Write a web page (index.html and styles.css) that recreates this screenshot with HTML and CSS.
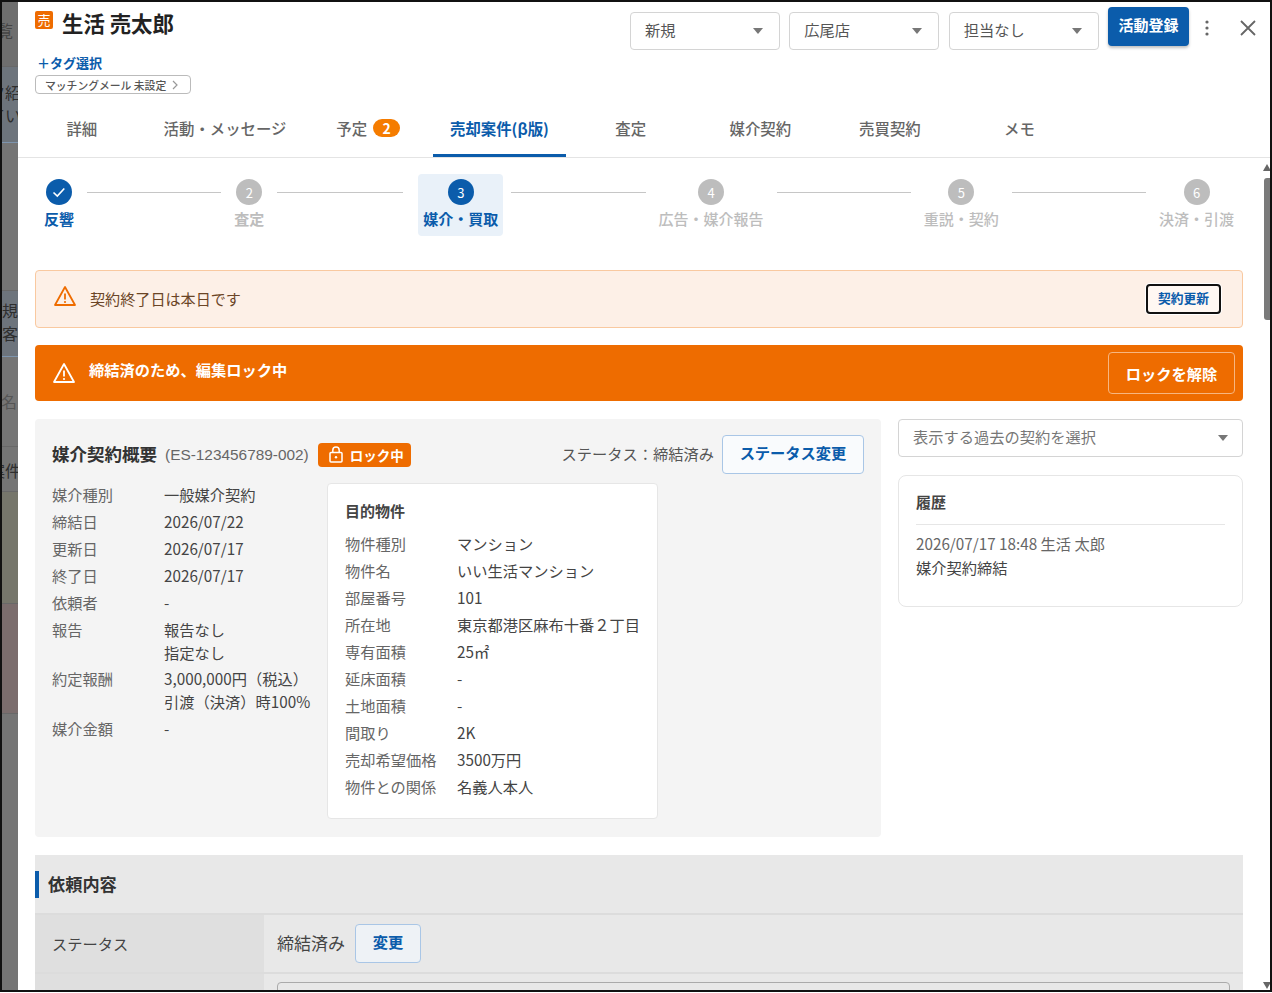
FILE: index.html
```html
<!DOCTYPE html>
<html lang="ja">
<head>
  <meta charset="UTF-8" />
  <title>生活 売太郎</title>
  <link rel="stylesheet" href="styles.css">
</head>
<body>
  <div class="frame">
    <div class="backdrop">
      <div class="bd-row bd-1"><span>覧</span></div>
      <div class="bd-row bd-2"><span>夕紹</span><span>てい</span></div>
      <div class="bd-row bd-3"></div>
      <div class="bd-row bd-4"><span>新規</span><span>顧客</span></div>
      <div class="bd-row bd-5"><span class="dim">名</span></div>
      <div class="bd-row bd-6"><span>案件</span></div>
      <div class="bd-row bd-7"></div>
      <div class="bd-row bd-8"></div>
      <div class="bd-row bd-9"></div>
    </div>

    <div class="modal">
      <div class="head">
        <div class="head-left">
          <div class="title-row">
            <span class="sell-icon">売</span>
            <h1>生活 売太郎</h1>
          </div>
          <a class="tag-link">＋タグ選択</a>
          <div class="mail-pill">マッチングメール 未設定
            <svg width="8" height="10" viewBox="0 0 8 10"><path d="M2 1l4 4-4 4" fill="none" stroke="#999" stroke-width="1.2"/></svg>
          </div>
        </div>
        <div class="head-right">
          <div class="select small"><span>新規</span><i class="caret"></i></div>
          <div class="select small"><span>広尾店</span><i class="caret"></i></div>
          <div class="select small"><span>担当なし</span><i class="caret"></i></div>
          <button class="btn-primary">活動登録</button>
          <svg class="kebab" width="6" height="18" viewBox="0 0 6 18"><circle cx="3" cy="3" r="1.6"/><circle cx="3" cy="9" r="1.6"/><circle cx="3" cy="15" r="1.6"/></svg>
          <svg class="close" width="16" height="16" viewBox="0 0 16 16"><path d="M1 1l14 14M15 1L1 15" stroke="#666" stroke-width="1.8" fill="none"/></svg>
        </div>
      </div>

      <div class="tabs">
        <div class="tab">詳細</div>
        <div class="tab">活動・メッセージ</div>
        <div class="tab">予定<span class="tab-badge">2</span></div>
        <div class="tab active">売却案件(β版)</div>
        <div class="tab">査定</div>
        <div class="tab">媒介契約</div>
        <div class="tab">売買契約</div>
        <div class="tab">メモ</div>
      </div>

      <div class="content">
        <div class="stepper">
          <div class="step done">
            <span class="circle"><svg width="16" height="16" viewBox="0 0 16 16"><path d="M2.5 8.5l3.8 3.6 7-7.6" fill="none" stroke="#fff" stroke-width="1.6"/></svg></span>
            <span class="step-label">反響</span>
          </div>
          <div class="line"></div>
          <div class="step"><span class="circle">2</span><span class="step-label bold">査定</span></div>
          <div class="line line-short"></div>
          <div class="step current"><span class="circle">3</span><span class="step-label">媒介・買取</span></div>
          <div class="line"></div>
          <div class="step"><span class="circle">4</span><span class="step-label">広告・媒介報告</span></div>
          <div class="line"></div>
          <div class="step"><span class="circle">5</span><span class="step-label">重説・契約</span></div>
          <div class="line"></div>
          <div class="step"><span class="circle">6</span><span class="step-label">決済・引渡</span></div>
        </div>

        <div class="alert alert-warn">
          <svg width="24" height="22" viewBox="0 0 24 22"><path d="M12 2L2 20h20z" fill="none" stroke="#ee6c00" stroke-width="1.8" stroke-linejoin="round"/><path d="M12 8.5v6" stroke="#ee6c00" stroke-width="1.8"/><circle cx="12" cy="17" r="1.1" fill="#ee6c00"/></svg>
          <span class="alert-text">契約終了日は本日です</span>
          <button class="btn-renew">契約更新</button>
        </div>

        <div class="alert alert-lock">
          <svg width="24" height="22" viewBox="0 0 24 22"><path d="M12 2L2 20h20z" fill="none" stroke="#fff" stroke-width="1.8" stroke-linejoin="round"/><path d="M12 8.5v6" stroke="#fff" stroke-width="1.8"/><circle cx="12" cy="17" r="1.1" fill="#fff"/></svg>
          <span class="alert-text">締結済のため、編集ロック中</span>
          <button class="btn-unlock">ロックを解除</button>
        </div>

        <div class="columns">
          <div class="panel">
            <div class="panel-head">
              <h2>媒介契約概要</h2>
              <span class="contract-no">(ES-123456789-002)</span>
              <span class="lock-badge">
                <svg width="14" height="17" viewBox="0 0 14 17"><rect x="1" y="6.5" width="12" height="9.5" rx="1" fill="none" stroke="#fff" stroke-width="1.5"/><path d="M3.8 6.5V4.2a3.2 3.2 0 0 1 6.4 0v2.3" fill="none" stroke="#fff" stroke-width="1.5"/><circle cx="7" cy="11.2" r="1.2" fill="#fff"/></svg>
                ロック中
              </span>
              <span class="status-text">ステータス：締結済み</span>
              <button class="btn-outline btn-status">ステータス変更</button>
            </div>
            <div class="panel-body">
              <dl class="summary">
                <div class="row"><dt>媒介種別</dt><dd>一般媒介契約</dd></div>
                <div class="row"><dt>締結日</dt><dd>2026/07/22</dd></div>
                <div class="row"><dt>更新日</dt><dd>2026/07/17</dd></div>
                <div class="row"><dt>終了日</dt><dd>2026/07/17</dd></div>
                <div class="row"><dt>依頼者</dt><dd>-</dd></div>
                <div class="row tight"><dt>報告</dt><dd>報告なし<br>指定なし</dd></div>
                <div class="row"><dt>約定報酬</dt><dd>3,000,000円（税込）<br>引渡（決済）時100%</dd></div>
                <div class="row"><dt>媒介金額</dt><dd>-</dd></div>
              </dl>
              <div class="property">
                <h3>目的物件</h3>
                <dl>
                  <div class="row"><dt>物件種別</dt><dd>マンション</dd></div>
                  <div class="row"><dt>物件名</dt><dd>いい生活マンション</dd></div>
                  <div class="row"><dt>部屋番号</dt><dd>101</dd></div>
                  <div class="row"><dt>所在地</dt><dd>東京都港区麻布十番２丁目</dd></div>
                  <div class="row"><dt>専有面積</dt><dd>25㎡</dd></div>
                  <div class="row"><dt>延床面積</dt><dd>-</dd></div>
                  <div class="row"><dt>土地面積</dt><dd>-</dd></div>
                  <div class="row"><dt>間取り</dt><dd>2K</dd></div>
                  <div class="row"><dt>売却希望価格</dt><dd>3500万円</dd></div>
                  <div class="row"><dt>物件との関係</dt><dd>名義人本人</dd></div>
                </dl>
              </div>
            </div>
          </div>

          <div class="side">
            <div class="select past"><span>表示する過去の契約を選択</span><i class="caret"></i></div>
            <div class="history">
              <h3>履歴</h3>
              <p class="history-date">2026/07/17 18:48 生活 太郎</p>
              <p class="history-text">媒介契約締結</p>
            </div>
          </div>
        </div>

        <div class="request">
          <div class="request-title"><h2>依頼内容</h2></div>
          <div class="req-row">
            <div class="req-label">ステータス</div>
            <div class="req-value">締結済み<button class="btn-outline btn-change">変更</button></div>
          </div>
          <div class="req-row">
            <div class="req-label"></div>
            <div class="req-value top"><div class="req-input"></div></div>
          </div>
        </div>
      </div>

      <div class="scrollbar">
        <i class="sb-up"></i>
        <i class="sb-thumb"></i>
        <i class="sb-down"></i>
      </div>
    </div>
  </div>
</body>
</html>
```

FILE: styles.css
```css
* { box-sizing: border-box; }
html, body { margin: 0; padding: 0; background: #fff; }
body {
  font-family: "Noto Sans CJK JP", "Noto Sans", sans-serif;
  font-size: 15px;
  color: #444;
  overflow: hidden;
}
h1, h2, h3, p, dl, dd { margin: 0; }
button { font-family: inherit; cursor: pointer; }

.frame {
  width: 1272px; height: 992px;
  border: 2px solid #111;
  display: flex;
  overflow: hidden;
}

/* dimmed page behind the modal */
.backdrop { width: 16px; flex: none; background: #757575; overflow: hidden; }
.bd-row {
  display: flex; flex-direction: column; align-items: flex-end;
  overflow: hidden;
  font-size: 16px; line-height: 23px;
  color: #2e2e2e;
  white-space: nowrap;
  border-bottom: 1px solid #686868;
}
.bd-row span { margin-right: -3px; }
.bd-row .dim { color: #555; margin-right: 1px; }
.bd-1 { height: 65px; padding-top: 17px; background: #6e6e6e; color: #444; }
.bd-1 span { margin-right: 5px; }
.bd-2 { height: 76px; padding-top: 14px; background: #6d747c; border-color: #7d94ad; }
.bd-3 { height: 148px; }
.bd-4 { height: 66px; padding-top: 8px; background: #6d747c; border-color: #7d94ad; }
.bd-4 span { margin-right: 0; }
.bd-5 { height: 90px; padding-top: 33px; }
.bd-6 { height: 45px; padding-top: 12px; }
.bd-7 { height: 112px; background: #76766b; }
.bd-8 { height: 110px; background: #7b6d6d; }
.bd-9 { height: 280px; }

.modal { flex: 1; position: relative; background: #fff; overflow: hidden; }

/* header */
.head { height: 101px; display: flex; justify-content: space-between; padding: 0 0 0 17px; }
.title-row { display: flex; align-items: flex-start; height: 46px; padding-top: 9px; }
.sell-icon {
  width: 18px; height: 18px; flex: none;
  background: #ee6c00; color: #fff; border-radius: 2px;
  font-size: 13px; line-height: 18px; text-align: center;
}
h1 { margin-left: 9px; margin-top: -2px; font-size: 21.4px; line-height: 27px; font-weight: 700; color: #222; white-space: nowrap; }
.tag-link { display: block; margin: 6px 0 0 2px; font-size: 13px; line-height: 18px; font-weight: 700; color: #0b5cab; }
.mail-pill {
  margin-top: 3px; width: 156px; height: 19px;
  border: 1px solid #bbb; border-radius: 4px; background: #fff;
  padding-left: 9px;
  display: flex; align-items: center; gap: 5px;
  font-size: 10.8px; font-weight: 500; color: #555; white-space: nowrap;
}
.head-right { display: flex; align-items: flex-start; padding-top: 5px; }
.select {
  display: flex; align-items: center; justify-content: space-between;
  background: #fff; border: 1px solid #d4d4d4; border-radius: 4px;
  color: #555; font-size: 15.25px;
}
.select span { margin-top: -5px; }
.select.small { width: 150px; height: 38px; margin: 5px 9.33px 0 0; padding: 0 16px 0 14px; }
.caret { width: 0; height: 0; border-left: 5.5px solid transparent; border-right: 5.5px solid transparent; border-top: 6px solid #777; }
.btn-primary {
  width: 81px; height: 39px; margin-left: 0; padding: 0 0 4px;
  background: #0b5cab; color: #fff; border: none; border-radius: 4px;
  font-size: 15px; font-weight: 700;
  box-shadow: 0 2px 3px rgba(0,0,0,0.25);
}
.kebab { fill: #666; margin: 12px 0 0 15px; }
.close { margin: 13px 14px 0 30px; }

/* tabs */
.tabs { display: flex; height: 55px; padding-left: 0; border-bottom: 1px solid #e4e4e4; }
.tab {
  min-width: 129.6px; height: 54px; padding: 0 17px 4px;
  display: flex; align-items: center; justify-content: center;
  font-size: 15.4px; font-weight: 500; color: #666; white-space: nowrap;
}
.tab:first-child { margin-left: -1px; }
.tab.active { color: #0b5cab; font-weight: 700; border-bottom: 3px solid #0b5cab; padding-bottom: 1px; min-width: 132px; }
.tab-badge {
  margin-left: 6px; width: 27px; height: 18px; border-radius: 9px;
  background: #f57c00; color: #fff;
  font-size: 14px; font-weight: 700; line-height: 18px; text-align: center;
}

.content { padding: 16px 27px 0 17px; }

/* stepper */
.stepper { display: flex; align-items: flex-start; height: 62px; padding: 0 9px; }
.step { display: flex; flex-direction: column; align-items: center; flex: none; padding-top: 5px; height: 62px; }
.circle {
  width: 26px; height: 26px; border-radius: 50%;
  background: #bdbdbd; color: #fff;
  display: flex; align-items: center; justify-content: center;
  font-size: 13px;
}
.step-label { margin-top: 4px; font-size: 15px; line-height: 20px; color: #bdbdbd; white-space: nowrap; font-weight: 500; }
.step-label.bold { font-weight: 700; }
.step.done .circle, .step.current .circle { background: #0b5cab; }
.step.done .step-label, .step.current .step-label { color: #0b5cab; font-weight: 700; }
.step.current { background: #e9f1f9; border-radius: 4px; padding: 5px 5px 0; margin: 0 -5px 0 2px; }
.line { flex: 1; height: 1px; background: #c6c6c6; margin: 18px 13px 0; }
.line-short { flex: 0 0 126px; }

/* alerts */
.alert { display: flex; align-items: center; border-radius: 4px; }
.alert-warn {
  margin-top: 34px; height: 58px; padding: 0 21px 0 17px;
  background: #fdf0e7; border: 1px solid #f9c9a0;
}
.alert-warn .alert-text { margin: -2px 0 0 13px; color: #6b4526; font-size: 15.1px; }
.alert-warn svg { margin-top: -6px; }
.btn-renew {
  margin-left: auto; width: 75px; height: 30px; padding: 0 0 3px;
  background: #fff8f3; border: 2px solid #111; border-radius: 4px;
  color: #0b5cab; font-size: 12.75px; font-weight: 700;
  box-shadow: 0 0 0 1px #fff;
}
.alert-lock {
  margin-top: 17px; height: 56px; padding: 0 8px 0 17px;
  background: #ee6c00; color: #fff;
}
.alert-lock .alert-text { margin: -8px 0 0 13px; font-size: 15.25px; font-weight: 700; }
.btn-unlock {
  margin-left: auto; width: 127px; height: 42px; padding: 0;
  background: transparent; border: 1px solid #f7b680; border-radius: 4px;
  color: #fff; font-size: 15.25px; font-weight: 700;
}

/* contract columns */
.columns { display: flex; align-items: flex-start; margin-top: 18px; }
.panel { width: 846px; height: 418px; background: #f4f4f4; border-radius: 4px; padding: 16px 17px 0; }
.panel-head { display: flex; align-items: center; height: 39px; }
.panel-head h2 { margin-top: -2px; font-size: 17.5px; font-weight: 700; color: #333; white-space: nowrap; }
.contract-no { margin-left: 8px; font-family: "Liberation Sans", Arial, sans-serif; font-size: 15.4px; color: #666; white-space: nowrap; }
.lock-badge {
  margin-left: 9px; width: 93px; height: 24px; padding-left: 11px;
  display: flex; align-items: center; gap: 7px;
  background: #ee6c00; color: #fff; border-radius: 4px;
  font-size: 13.5px; font-weight: 700; white-space: nowrap;
}
.status-text { margin-left: auto; margin-top: -3px; font-size: 15.25px; color: #555; white-space: nowrap; }
.btn-outline {
  background: #f9fbfd; border: 1px solid #a9c6e6; border-radius: 4px;
  color: #0b5cab; font-weight: 700; font-size: 15.25px; padding: 0;
}
.btn-status { width: 142px; height: 39px; margin-left: 8px; padding-bottom: 5px; }
.panel-body { display: flex; margin-top: 9px; }

.row { display: flex; }
dt { color: #666; }
dd { color: #444; }
.summary { width: 275px; font-size: 15.25px; line-height: 23px; }
.summary .row { margin-bottom: 4px; }
.summary .row.tight { margin-bottom: 3px; }
.summary dt { width: 112px; flex: none; }
.property {
  width: 331px; height: 336px;
  background: #fff; border: 1px solid #e6e6e6; border-radius: 4px;
  padding: 16px 17px 0;
  font-size: 15.25px; line-height: 23px;
}
.property h3 { font-size: 15px; font-weight: 700; line-height: 22px; color: #444; margin-bottom: 10px; }
.property .row { margin-bottom: 4px; }
.property dt { width: 112px; flex: none; white-space: nowrap; }

/* right side */
.side { width: 345px; margin-left: 17px; }
.select.past { height: 38px; padding: 0 14px 0 14px; color: #777; }
.history {
  margin-top: 18px; height: 132px;
  background: #fff; border: 1px solid #e6e6e6; border-radius: 8px;
  padding: 15px 17px 0 17px;
}
.history h3 { font-size: 15px; font-weight: 700; line-height: 22px; color: #444; padding-bottom: 11px; border-bottom: 1px solid #e6e6e6; }
.history-date { margin-top: 7px; font-size: 15.25px; line-height: 23px; color: #666; white-space: nowrap; }
.history-text { margin-top: 1px; font-size: 15.25px; line-height: 23px; color: #444; }

/* request section */
.request { margin-top: 18px; background: #e8e8e8; }
.request-title { height: 60px; padding-top: 16px; border-bottom: 2px solid #dcdcdc; }
.request-title h2 {
  height: 27px; padding-left: 9px; border-left: 4px solid #0b5cab;
  font-size: 17.2px; font-weight: 700; line-height: 25px; color: #333;
}
.req-row { display: flex; height: 59px; border-bottom: 2px solid #dcdcdc; }
.req-label { width: 229px; flex: none; background: #dfdfdf; padding: 0 17px 2px; display: flex; align-items: center; font-size: 15.25px; color: #444; }
.req-value { flex: 1; padding: 0 13px 3px; display: flex; align-items: center; font-size: 17px; color: #444; }
.req-value.top { align-items: flex-start; padding-top: 8px; }
.btn-change { width: 66px; height: 39px; margin: 3px 0 0 10px; padding-bottom: 5px; background: #eef2f6; }
.req-input { flex: 1; height: 50px; border: 1px solid #aaa; border-radius: 4px; }

/* fake scrollbar over the modal's right edge */
.scrollbar { position: absolute; top: 162px; right: 0; bottom: 0; width: 6px; }
.sb-up { position: absolute; top: 0; right: -1px; width: 0; height: 0; border-left: 4px solid transparent; border-right: 4px solid transparent; border-bottom: 7px solid #666; }
.sb-thumb { position: absolute; top: 14px; right: 0; width: 6px; height: 142px; background: #7a7a7a; border-radius: 3px 0 0 3px; }
.sb-down { position: absolute; bottom: 1px; right: -1px; width: 0; height: 0; border-left: 4px solid transparent; border-right: 4px solid transparent; border-top: 7px solid #666; }
```
